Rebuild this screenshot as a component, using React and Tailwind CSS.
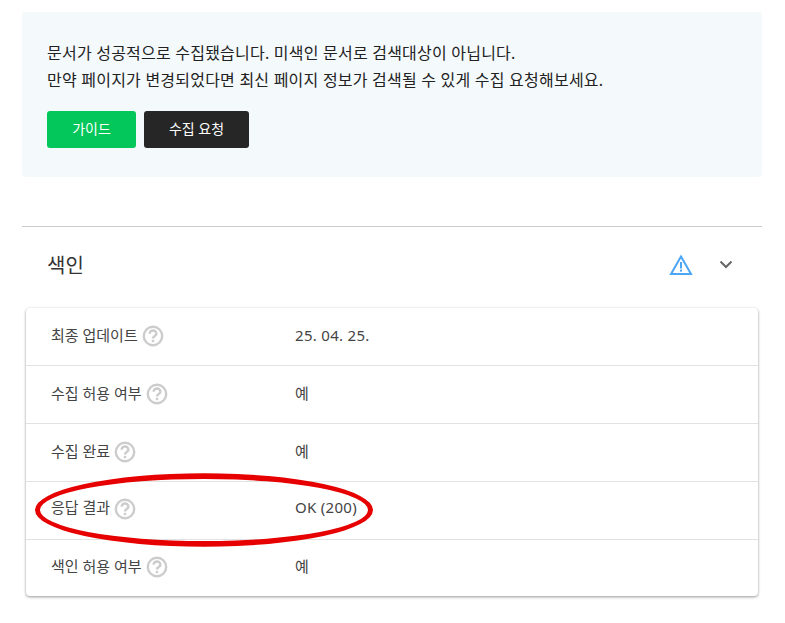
import React from 'react';

const FONT = 'font-["Noto_Sans","Noto_Sans_CJK_KR",sans-serif]';

const HelpIcon = () => (
  <svg width="22" height="22" viewBox="0 0 22 22" fill="none" className="shrink-0">
    <circle cx="11" cy="11" r="9.2" stroke="#cccccc" strokeWidth="2.4" />
    <path d="M7.6 8.8a3.4 3.3 0 0 1 6.8 0c0 2.3-3.4 2.3-3.4 4.6" stroke="#cccccc" strokeWidth="2.4" />
    <rect x="9.8" y="14.8" width="2.4" height="2.4" fill="#cccccc" />
  </svg>
);

const rows = [
  ['최종 업데이트', '25. 04. 25.', 'h-[57px] pb-[3px]'],
  ['수집 허용 여부', '예', 'h-[58px] pb-[3px] border-t border-[#e2e2e2]'],
  ['수집 완료', '예', 'h-[58px] pb-[3px] border-t border-[#e2e2e2]'],
  ['응답 결과', 'OK (200)', 'h-[58px] pb-[6px] border-t border-[#e2e2e2]'],
  ['색인 허용 여부', '예', 'h-[57px] pb-[4px] border-t border-[#e2e2e2]'],
];

export default function App() {
  return (
    <div className={`${FONT} w-[785px] h-[623px] overflow-hidden bg-white pt-3 pl-[22px] pr-[23px] relative`}>
      <div className="h-[165px] bg-[#f4f9fc] rounded-[3px] pt-[28px] pl-[25px]">
        <p className="text-[16px] tracking-[0.22px] leading-[27px] text-[#222222]">문서가 성공적으로 수집됐습니다. 미색인 문서로 검색대상이 아닙니다.</p>
        <p className="text-[16px] tracking-[0.22px] leading-[27px] text-[#222222]">만약 페이지가 변경되었다면 최신 페이지 정보가 검색될 수 있게 수집 요청해보세요.</p>
        <div className="flex gap-2 mt-[17px]">
          <button className="w-[89px] h-[37px] rounded-[3px] bg-[#03c75a] text-white text-[14px] pb-[3px]">가이드</button>
          <button className="w-[105px] h-[37px] rounded-[3px] bg-[#262626] text-white text-[14px] pb-[3px]">수집 요청</button>
        </div>
      </div>

      <div className="mt-[49px] border-t border-[#cccccc] h-[82px] flex items-center pl-[25px] pr-[29px] pb-[6px]">
        <h2 className="text-[20px] text-[#333333] flex-1 mt-[2px]">색인</h2>
        <svg width="24" height="22" viewBox="0 0 24 22" fill="none" className="mr-[26px] -ml-1">
          <path d="M12 2.6 L22 20 H2 Z" stroke="#4ca6f5" strokeWidth="2" />
          <rect x="11" y="8" width="2" height="6.5" fill="#4ca6f5" />
          <rect x="11" y="15.6" width="2" height="2" fill="#4ca6f5" />
        </svg>
        <svg width="14" height="9" viewBox="0 0 14 9" fill="none">
          <path d="M1.5 1.5 L7 7 L12.5 1.5" stroke="#666666" strokeWidth="2" />
        </svg>
      </div>

      <div className="ml-1 mr-1 rounded-[4px] bg-white shadow-[0_1px_3px_rgba(0,0,0,0.42)]">
        {rows.map(([label, value, rowClass]) => (
          <div key={label} className={`flex items-center pl-[25px] ${rowClass}`}>
            <div className="w-[244px] flex items-center gap-[4px] text-[15px] text-[#444444]">
              <span>{label}</span>
              <span className="mt-[2px]"><HelpIcon /></span>
            </div>
            <span className="text-[15px] tracking-[0.3px] text-[#444444]">{value}</span>
          </div>
        ))}
      </div>

      {/* hand drawn annotation */}
      <svg width="340" height="76" viewBox="0 0 340 76" fill="none" className="absolute left-[35px] top-[473px]">
        <path
          fillRule="evenodd"
          fill="#e60000"
          d="M0 37a169 36.7 0 1 0 338 0a169 36.7 0 1 0 -338 0Z M5 37a164 31 0 1 0 328 0a164 31 0 1 0 -328 0Z"
        />
      </svg>
    </div>
  );
}
